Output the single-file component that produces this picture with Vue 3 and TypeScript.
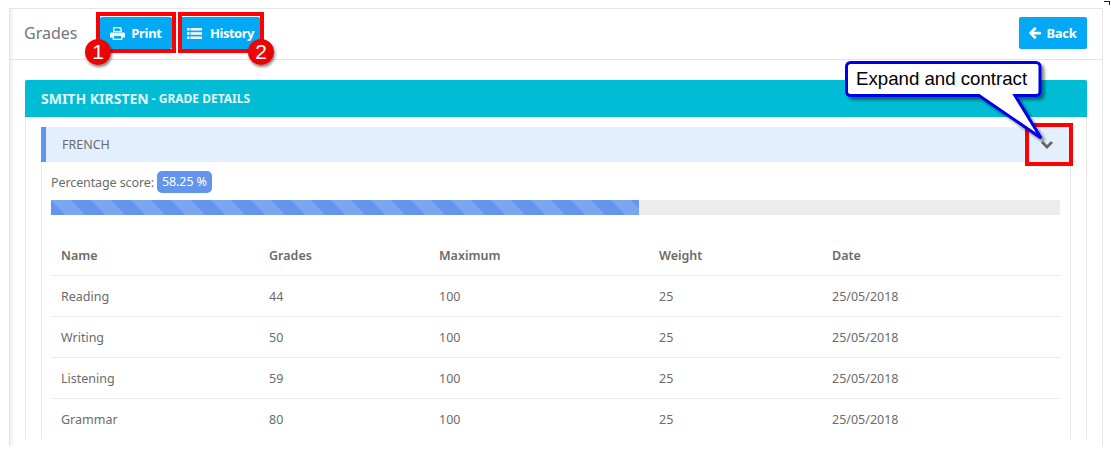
<script setup lang="ts">
interface Row { name: string; grade: number; max: number; weight: number; date: string }
const rows: Row[] = [
  { name: 'Reading', grade: 44, max: 100, weight: 25, date: '25/05/2018' },
  { name: 'Writing', grade: 50, max: 100, weight: 25, date: '25/05/2018' },
  { name: 'Listening', grade: 59, max: 100, weight: 25, date: '25/05/2018' },
  { name: 'Grammar', grade: 80, max: 100, weight: 25, date: '25/05/2018' },
]
const percent = 58.25
</script>

<template>
  <div class="page">
    <div class="panel">
      <header class="toolbar">
        <span class="title">Grades</span>
        <button class="btn">
          <svg class="ic" width="15" height="13" viewBox="0 0 14 13" preserveAspectRatio="none"><path fill="#fff" d="M3 0h6.500L11 1.500V5H3zM4.200 1.200v2.800h5.600V2.200H8.800V1.200zM1.500 5.500h11c.8 0 1.500.7 1.500 1.500v3.500h-2.500V13h-9v-2.500H0V7c0-.8.7-1.500 1.500-1.500zM3.700 9v2.800h6.600V9z"/></svg>
          Print
        </button>
        <button class="btn btn-hist">
          <svg class="ic" width="15" height="11" viewBox="0 0 15 11"><path fill="#fff" d="M0 0h2.500v2.500H0zM3.500 0H15v2.500H3.500zM0 4.200h2.500v2.500H0zM3.500 4.200H15v2.500H3.500zM0 8.400h2.500V11H0zM3.500 8.400H15V11H3.500z"/></svg>
          History
        </button>
        <button class="btn btn-back">
          <svg class="ic" width="12" height="12" viewBox="0 0 12 12"><path fill="#fff" d="M6.200.3 7.300 1.400c.3.300.3.700 0 1L4.600 4.700h6.500c.5 0 .9.400.9.900v.9c0 .5-.4.900-.9.900H4.600l2.700 2.300c.3.300.3.700 0 1l-1.100 1.100c-.3.300-.7.300-1 0L.3 6.500c-.3-.3-.3-.7 0-1L5.200.3c.3-.3.700-.3 1 0z"/></svg>
          Back
        </button>
      </header>

      <section class="card">
        <div class="card-head">
          <strong class="student">SMITH KIRSTEN</strong>
          <span class="sub">- GRADE DETAILS</span>
        </div>
        <div class="card-body">
          <div class="accordion">
            <div class="acc-head">
              <span>FRENCH</span>
              <svg class="chev" width="12" height="8" viewBox="0 0 12 8"><path d="M1 1l5 5 5-5" fill="none" stroke="#666" stroke-width="2.800"/></svg>
            </div>
            <div class="acc-body">
              <div class="score">
                <span>Percentage score:</span>
                <span class="pill">{{ percent }} %</span>
              </div>
              <div class="track">
                <div class="fill" :style="{ width: percent + '%' }"></div>
              </div>
              <table class="grades">
                <colgroup>
                  <col class="c1" />
                  <col class="c2" />
                  <col class="c3" />
                  <col class="c4" />
                  <col />
                </colgroup>
                <thead>
                  <tr>
                    <th>Name</th><th>Grades</th><th>Maximum</th><th>Weight</th><th>Date</th>
                  </tr>
                </thead>
                <tbody>
                  <tr v-for="r in rows" :key="r.name">
                    <td>{{ r.name }}</td>
                    <td>{{ r.grade }}</td>
                    <td>{{ r.max }}</td>
                    <td>{{ r.weight }}</td>
                    <td>{{ r.date }}</td>
                  </tr>
                </tbody>
              </table>
            </div>
          </div>
        </div>
      </section>
    </div>

    <!-- Annotations drawn over the screenshot -->
    <div class="mark mark-print"></div>
    <div class="mark mark-hist"></div>
    <div class="mark mark-chev"></div>
    <div class="badge badge-1">1</div>
    <div class="badge badge-2">2</div>

    <svg class="callout" width="220" height="100" viewBox="0 0 220 100">
      <defs>
        <filter id="sh" x="-10%" y="-10%" width="125%" height="130%">
          <feDropShadow dx="3" dy="3" stdDeviation="1.500" flood-color="#000" flood-opacity=".45"/>
        </filter>
      </defs>
      <path filter="url(#sh)" fill="#fff" stroke="#0000e6" stroke-width="3"
        d="M6.500 2.500H192a4 4 0 0 1 4 4V31.500a4 4 0 0 1-4 4H171L197 78 135 35.500H6.500a4 4 0 0 1-4-4V6.500a4 4 0 0 1 4-4z"/>
      <text x="12" y="25">Expand and contract</text>
    </svg>

    <div class="cursor"></div>
  </div>
</template>

<style scoped>
.page {
  position: relative;
  width: 1111px;
  height: 454px;
  overflow: hidden;
  background: #fff;
  padding: 8px 8px 0 9px;
  box-sizing: border-box;
  font-family: "Noto Sans", sans-serif;
  font-size: 13px;
  color: #6b6b6b;
}
.panel {
  width: 1094px;
  height: 438px;
  overflow: hidden;
  box-sizing: border-box;
  border-top: 1px solid #e6e6e6;
  border-left: 1px solid #e4e4e4;
  border-right: 1px solid #e8e8e8;
  background: linear-gradient(90deg, #f0f0f0, #fff 5px);
}
.toolbar {
  display: flex;
  align-items: center;
  height: 51px;
  box-sizing: border-box;
  border-bottom: 1px solid #e4e4e4;
  padding: 0 15px 2px 14px;
}
.title { font-size: 16px; color: #6f7880; width: 76px; }
.btn {
  display: inline-flex;
  align-items: center;
  justify-content: center;
  gap: 6px;
  height: 32px;
  padding: 0;
  border: 0;
  border-radius: 2px;
  background: #03a9f4;
  color: #fff;
  font: 700 13px "Noto Sans", sans-serif;
  letter-spacing: -.3px;
  width: 72px;
}
.btn-hist { width: 79px; margin-left: 9px; gap: 8px; letter-spacing: -.5px; }
.btn-back { width: 68px; margin-left: auto; gap: 5px; }
.ic { flex: none; }
.card {
  margin: 20px 15px 0 15px;
  border-left: 1px solid #e8e8e8;
  border-right: 1px solid #e8e8e8;
}
.card-head {
  height: 37px;
  background: #00bcd4;
  color: #e0f7fa;
  display: flex;
  align-items: center;
  gap: 3px;
  padding-left: 16px;
  border-radius: 2px 2px 0 0;
  margin: 0 -1px;
}
.student { font-size: 14px; }
.sub { font-size: 12px; font-weight: 700; }
.card-body { padding: 10px 15px 0; }
.accordion {
  border-right: 1px solid #e8e8e8;
  border-left: 1px solid #e8e8e8;
}
.acc-head {
  height: 35px;
  margin: 0 -1px;
  display: flex;
  align-items: center;
  justify-content: space-between;
  background: #e3effd;
  border-left: 5px solid #6495ed;
  padding: 0 18px 0 16px;
  color: #6b6b6b;
  font-size: 12.500px;
}
.chev { margin-top: 1px; }
.acc-body { padding: 9px 10px 0 9px; }
.score { display: flex; align-items: center; gap: 3px; height: 22px; font-size: 12.500px; letter-spacing: -.1px; }
.pill {
  background: #6495ed;
  color: #fff;
  border-radius: 5px;
  height: 22px;
  line-height: 22px;
  padding: 0 5px;
}
.track { margin-top: 7px; height: 15px; background: #ececec; }
.fill {
  height: 100%;
  background-color: #6495ed;
  background-image: linear-gradient(45deg,
    rgba(255,255,255,.15) 25%, transparent 25%, transparent 50%,
    rgba(255,255,255,.15) 50%, rgba(255,255,255,.15) 75%, transparent 75%, transparent);
  background-size: 40px 40px;
}
.grades {
  width: 100%;
  margin-top: 20px;
  border-collapse: collapse;
  table-layout: fixed;
  font-size: 12.500px;
}
.c1 { width: 208px; }
.c2 { width: 170px; }
.c3 { width: 220px; }
.c4 { width: 173px; }
.grades th, .grades td {
  text-align: left;
  height: 40px;
  padding: 0 10px;
  border-bottom: 1px solid #ebebeb;
}
.grades tbody tr:last-child td { border-bottom: 0; }
.grades th { font-weight: 600; color: #6b6b6b; }
.mark { position: absolute; border: 4px solid #f00; box-sizing: border-box; }
.mark-print { left: 96px; top: 12px; width: 80px; height: 41px; }
.mark-hist { left: 178px; top: 12px; width: 86px; height: 41px; }
.mark-chev { left: 1025px; top: 123px; width: 48px; height: 43px; }
.badge {
  position: absolute;
  width: 26px;
  height: 26px;
  border-radius: 50%;
  background: radial-gradient(circle at 40% 35%, #f60808, #dc0000);
  box-shadow: 1px 2px 3px rgba(0,0,0,.5);
  color: #fff;
  font: 21px/26px "Liberation Sans", sans-serif;
  text-align: center;
}
.badge-1 { left: 85px; top: 39px; }
.badge-2 { left: 248px; top: 39px; }
.callout { position: absolute; left: 844px; top: 60px; overflow: visible; }
.callout text { font: 18.670px "Liberation Sans", sans-serif; fill: #000; }
.cursor { position: absolute; left: 1104px; top: 1px; width: 5px; height: 3px; border-top: 1px solid #222; border-right: 1px solid #222; }
</style>
